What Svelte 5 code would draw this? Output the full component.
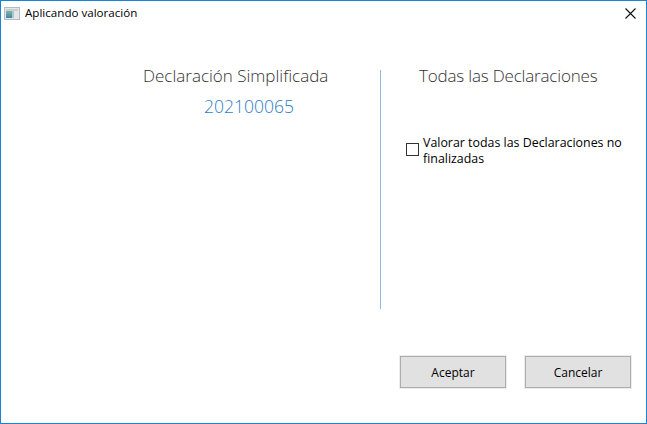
<script>
  let checked = $state(false);
</script>

<div class="window">
  <header class="titlebar">
    <svg class="appicon" width="16" height="16" viewBox="0 0 16 16">
      <defs>
        <linearGradient id="pane" x1="0" y1="0" x2="0" y2="1">
          <stop offset="0" stop-color="#7fb6a8" />
          <stop offset="1" stop-color="#3f86a8" />
        </linearGradient>
      </defs>
      <rect x="0.5" y="1.5" width="15" height="12" fill="#e4e8ea" stroke="#b4babd" />
      <rect x="2" y="3" width="12" height="2" fill="#c9ced1" />
      <rect x="2" y="5" width="6" height="7" fill="url(#pane)" />
      <rect x="8" y="5" width="2" height="7" fill="#a9c9c4" />
      <rect x="10" y="5" width="4" height="7" fill="#e2e6e6" />
    </svg>
    <span class="title">Aplicando valoración</span>
    <svg class="close" width="11" height="11" viewBox="0 0 11 11">
      <path d="M0.5 0.5 L10.5 10.5 M10.5 0.5 L0.5 10.5" stroke="#111" stroke-width="1.1" fill="none" />
    </svg>
  </header>

  <main class="panels">
    <section class="left">
      <h2>Declaración Simplificada</h2>
      <p class="number">202100065</p>
    </section>
    <section class="right">
      <h2 class="tight">Todas las Declaraciones</h2>
      <label class="check">
        <input type="checkbox" bind:checked />
        <span>Valorar todas las Declaraciones no finalizadas</span>
      </label>
    </section>
  </main>

  <footer class="actions">
    <button>Aceptar</button>
    <button>Cancelar</button>
  </footer>
</div>

<style>
  :global(body) {
    margin: 0;
    background: #fff;
  }
  .window {
    box-sizing: border-box;
    width: 647px;
    height: 424px;
    border: 1px solid #1883d7;
    background: #fff;
    display: flex;
    flex-direction: column;
    font-family: "Open Sans", "Liberation Sans", sans-serif;
    color: #000;
  }
  .titlebar {
    display: flex;
    align-items: center;
    height: 28px;
    padding: 0 10px 3px 3px;
    box-sizing: border-box;
    flex: none;
  }
  .appicon {
    margin-right: 5px;
  }
  .title {
    font-size: 11.6px;
    flex: 1;
    margin-top: -2px;
  }
  .panels {
    display: flex;
    margin-top: 41px;
    height: 239px;
    flex: none;
  }
  h2 {
    margin: 0;
    font-weight: 300;
    font-size: 17px;
    line-height: 12px;
    color: #333;
    white-space: nowrap;
  }
  .tight {
    letter-spacing: -0.18px;
  }
  .left {
    width: 380px;
    box-sizing: border-box;
    padding-left: 142px;
    border-right: 1px solid #8fb8e0;
  }
  .number {
    margin: 14px 0 0 61px;
    font-weight: 300;
    font-size: 17.5px;
    line-height: 20px;
    color: #2f7cc4;
  }
  .right {
    flex: 1;
    padding-left: 38px;
  }
  .check {
    display: flex;
    margin: 53px 0 0 -13px;
    width: 225px;
    font-size: 12.4px;
    line-height: 16px;
    align-items: flex-start;
  }
  .check input {
    appearance: none;
    width: 13px;
    height: 13px;
    margin: 8px 4px 0 0;
    border: 1px solid #333;
    background: #fff;
    flex: none;
    box-sizing: border-box;
  }
  .actions {
    display: flex;
    gap: 19px;
    margin-top: 47px;
    padding-left: 399px;
  }
  button {
    width: 106px;
    height: 32px;
    box-sizing: border-box;
    background: #e1e1e1;
    border: 1px solid #adadad;
    outline: 1px solid #ececec;
    font-family: inherit;
    font-size: 12px;
    color: #000;
    padding: 0;
  }
</style>
